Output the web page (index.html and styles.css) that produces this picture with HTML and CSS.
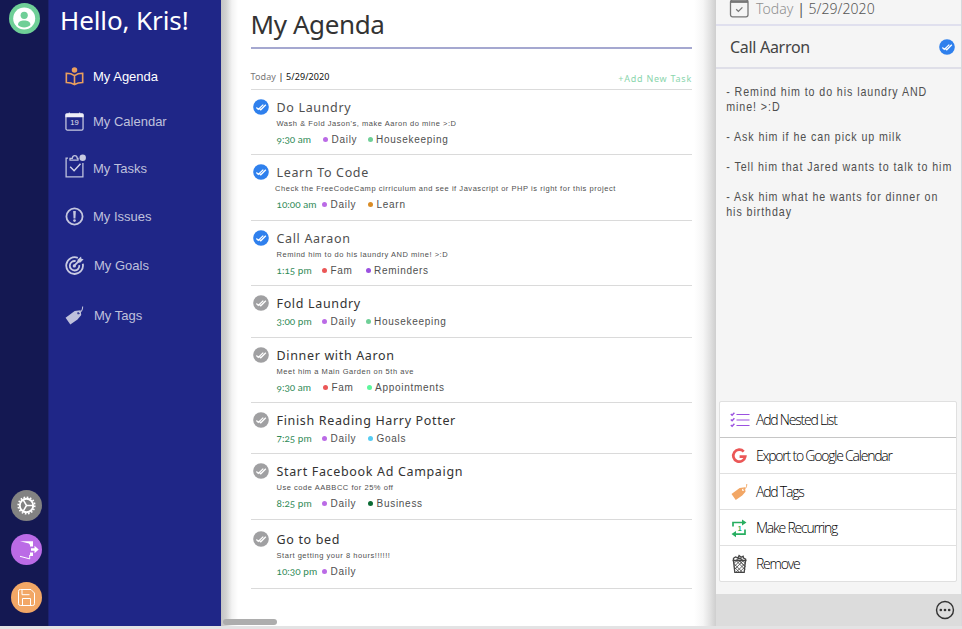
FILE: index.html
```html
<!DOCTYPE html>
<html lang="en">
<head>
<meta charset="utf-8">
<title>My Agenda</title>
<link rel="stylesheet" href="styles.css">
</head>
<body>
<svg class="defs" aria-hidden="true">
  <symbol id="check" viewBox="0 0 16 16">
    <circle cx="8" cy="8" r="7.800" fill="currentColor"/>
    <path d="M3.400 8.500l1.900 1.900 5-4.800M6.600 9.700l1.200 1.100 5-5" fill="none" stroke="#fff" stroke-width="1.300"/>
  </symbol>
  <symbol id="tag" viewBox="0 0 20 20">
    <path fill="currentColor" fill-rule="evenodd" d="M.6 12.300l9.600-7.100 6.200-.7.7 5.100-3.900 4.600-7.600 5.300zM14.200 6.200a1.300 1.300 0 1 0 .1 2.600 1.300 1.300 0 0 0-.1-2.600z"/>
    <path d="M14.300 7.400c2.600-.8 4.300-2.600 4.300-6.800" fill="none" stroke="currentColor" stroke-width="1.100"/>
  </symbol>
</svg>
<div class="app">
  <aside class="rail">
    <a class="avatar"><svg viewBox="0 0 31 31"><circle cx="15.500" cy="15.500" r="15.500" fill="#6fcf97"/><circle cx="15.200" cy="15.500" r="11" fill="#fff"/><circle cx="15.200" cy="12.300" r="3.600" fill="#6fcf97"/><path d="M9 22c0-3.600 2.800-4.500 6.200-4.500s6.200.9 6.200 4.500c-2.500 3.200-9.900 3.200-12.400 0z" fill="#6fcf97"/></svg></a>
    <div class="rail-actions">
      <a class="gear"><svg viewBox="0 0 31 31"><circle cx="15.500" cy="15.500" r="15.500" fill="#828282"/><g fill="none" stroke="#fff"><circle cx="15.500" cy="15.500" r="8.300" stroke-width="1.600" stroke-dasharray="1.630 1.630"/><circle cx="15.500" cy="15.500" r="6.700" stroke-width="1.900"/><path stroke-width="1.500" d="M15.500 15.500h6.500M15.500 15.500l-3.300-5.700M15.500 15.500l-3.300 5.700"/></g></svg></a>
      <a class="exit"><svg viewBox="0 0 31 31"><circle cx="15.500" cy="15.500" r="15.500" fill="#bb6be6"/><path d="M9 7.200h13v5.200h-3v-1.300l-1-1.700zM19 18.500h3v3.600h-3zM23.500 11.700l4.200 3.800-4.200 3.700v-2.500H20v-2.400h3.500z" fill="#fff"/><path d="M9 22.300l9.700 2.600v-4" fill="none" stroke="#fff" stroke-width="1"/></svg></a>
      <a class="save"><svg viewBox="0 0 31 31"><circle cx="15.500" cy="15.500" r="15.500" fill="#f2a766"/><g fill="none" stroke="#fff" stroke-width="1"><path d="M9.500 7.500h10.500l3.500 3.600v10.600a1.800 1.800 0 0 1-1.800 1.800H9.300a1.800 1.800 0 0 1-1.800-1.800V9.300a1.800 1.800 0 0 1 2-1.800z"/><path d="M11 7.500v5.200h7.500M11.500 23.500v-7h8v7"/></g></svg></a>
    </div>
  </aside>
  <nav class="sidebar">
    <h2>Hello, Kris!</h2>
    <a class="nav-item active"><svg viewBox="0 0 20 20"><circle cx="10" cy="3.200" r="2.900" fill="#eb9f5e"/><path d="M10 9C7.400 7.200 4.500 6.600 1.400 6.600v9.700c3.300 0 6 .5 8.600 2.200 2.600-1.700 5.300-2.200 8.600-2.200V6.600C15.500 6.600 12.600 7.200 10 9zM10 9v9" fill="none" stroke="#eb9f5e" stroke-width="1.700"/></svg>My Agenda</a>
    <a class="nav-item calendar"><svg viewBox="0 0 20 20"><rect x="1" y="2" width="18" height="17" rx="1.500" fill="none" stroke="#c9cbe2" stroke-width="1.300"/><path d="M.4 5.400V2.800q0-1.200 1.200-1.200H4V.4h1v1.200h10V.4h1v1.200h2.400q1.200 0 1.200 1.200v2.600z" fill="#eeeef7"/><text x="10" y="14" text-anchor="middle" class="cal-day">19</text></svg>My Calendar</a>
    <a class="nav-item tasks"><svg viewBox="0 0 21 24"><path d="M3 4.200H1.100v18.600h16.800V9M5 6.200V4.400h2.300q.3-2.700 2.500-2.700t2.500 2.700H13v1.800z" fill="none" stroke="#bfc2dd" stroke-width="1.300"/><path d="M5.200 12.800l3.900 4 6.400-7" fill="none" stroke="#d5d7e9" stroke-width="1.400"/><circle cx="17.700" cy="3.800" r="3.200" fill="#c9cbe2"/></svg>My Tasks</a>
    <a class="nav-item issues"><svg viewBox="0 0 20 20"><circle cx="10" cy="10" r="8.500" fill="none" stroke="#c5c7df" stroke-width="1.900"/><path d="M8.600 4.300h2.800L11 12H9z" fill="#c5c7df"/><circle cx="10" cy="14.300" r="1.400" fill="#c5c7df"/></svg>My Issues</a>
    <a class="nav-item goals"><svg viewBox="0 0 20 20"><g fill="none" stroke="#c9cbe2" stroke-width="1.900"><path d="M13.500 2A8.800 8.800 0 1 0 18.700 8.200"/><path d="M11.200 5.400A5 5 0 1 0 15 9.500"/><path d="M9.500 10.500l5-5"/></g><circle cx="9.800" cy="10.400" r="1.700" fill="#c9cbe2"/><path d="M13.200 3.900L16.900.6l.4 2.200 2.300.5-3.300 3.600-3 .2z" fill="#c9cbe2"/></svg>My Goals</a>
    <a class="nav-item tags"><svg viewBox="0 0 20 20"><use href="#tag"/></svg>My Tags</a>
  </nav>
  <main class="agenda">
    <h1>My Agenda</h1>
    <div class="day-head"><span class="day"><span class="muted">Today</span> | 5/29/2020</span><a class="add">+Add New Task</a></div>
    <ul class="tasks-list">
      <li class="task done"><svg><use href="#check"/></svg><div><h3>Do Laundry</h3><p>Wash &amp; Fold Jason's, make Aaron do mine &gt;:D</p><div class="meta wide"><time>9:30 am</time><span class="tag daily">Daily</span><span class="tag house">Housekeeping</span></div></div></li>
      <li class="task done tall"><svg><use href="#check"/></svg><div><h3>Learn To Code</h3><p class="outdent">Check the FreeCodeCamp cirriculum and see if Javascript or PHP is right for this project</p><div class="meta"><time>10:00 am</time><span class="tag daily">Daily</span><span class="tag learn">Learn</span></div></div></li>
      <li class="task done"><svg><use href="#check"/></svg><div><h3>Call Aaraon</h3><p>Remind him to do his laundry AND mine! &gt;:D</p><div class="meta close"><time>1:15 pm</time><span class="tag fam">Fam</span><span class="tag remind">Reminders</span></div></div></li>
      <li class="task short"><svg><use href="#check"/></svg><div><h3>Fold Laundry</h3><div class="meta close"><time>3:00 pm</time><span class="tag daily">Daily</span><span class="tag house">Housekeeping</span></div></div></li>
      <li class="task"><svg><use href="#check"/></svg><div><h3>Dinner with Aaron</h3><p>Meet him a Main Garden on 5th ave</p><div class="meta wide close"><time>9:30 am</time><span class="tag fam">Fam</span><span class="tag appt">Appointments</span></div></div></li>
      <li class="task shorter"><svg><use href="#check"/></svg><div><h3>Finish Reading Harry Potter</h3><div class="meta"><time>7:25 pm</time><span class="tag daily">Daily</span><span class="tag goal">Goals</span></div></div></li>
      <li class="task tall"><svg><use href="#check"/></svg><div><h3>Start Facebook Ad Campaign</h3><p>Use code AABBCC for 25% off</p><div class="meta"><time>8:25 pm</time><span class="tag daily">Daily</span><span class="tag business">Business</span></div></div></li>
      <li class="task last"><svg><use href="#check"/></svg><div><h3>Go to bed</h3><p>Start getting your 8 hours!!!!!!</p><div class="meta"><time>10:30 pm</time><span class="tag daily">Daily</span></div></div></li>
    </ul>
    <div class="scroll-thumb"></div>
  </main>
  <section class="detail">
    <header class="detail-date"><svg viewBox="0 0 20 20"><rect x="1" y="0" width="17.500" height="16.800" rx="2" fill="none" stroke="#777" stroke-width="1.300"/><path d="M1 1.800h17.500" stroke="#777" stroke-width="2.200"/><path d="M6.700 9.200l2.200 2.200 4-4" fill="none" stroke="#777" stroke-width="1.300"/></svg><span><span class="muted">Today</span> <b>|</b> 5/29/2020</span></header>
    <div class="detail-title"><span>Call Aarron</span><svg><use href="#check"/></svg></div>
    <div class="notes">
      <p>- Remind him to do his laundry AND<br>mine! &gt;:D</p>
      <p>- Ask him if he can pick up milk</p>
      <p>- Tell him that Jared wants to talk to him</p>
      <p>- Ask him what he wants for dinner on<br>his birthday</p>
    </div>
    <ul class="menu">
      <li><svg viewBox="0 0 20 20"><g fill="none" stroke="#9b51e0" stroke-width="1.200"><path d="M6.500 4.500h13M6.500 10h13M6.500 15.500h13"/><path d="M.8 4l1.300 1.200 2.300-2.500M.8 9.500l1.300 1.200 2.300-2.500M.8 15l1.300 1.200 2.300-2.500" stroke-width="1.400"/></g></svg>Add Nested List</li>
      <li><svg viewBox="0 0 20 20"><path d="M13.700 5.600A6 6 0 1 0 15.200 10.700H9.600" fill="none" stroke="#eb5757" stroke-width="2.700"/></svg>Export to Google Calendar</li>
      <li><svg viewBox="0 0 20 20" class="orange"><use href="#tag" x="1" y="1.500" width="17" height="17"/></svg>Add Tags</li>
      <li><svg viewBox="0 0 20 20"><g fill="none" stroke="#27ae60" stroke-width="1.700"><path d="M3 8.500V4.500h10M15 11.500v4.700H5"/></g><path d="M12 1.400l4.500 3.100-4.500 3.100zM6 13l-4.500 3.100L6 19.300z" fill="#27ae60"/><text x="9" y="12.700" text-anchor="middle" class="once">1</text></svg>Make Recurring</li>
      <li><svg viewBox="0 0 20 20"><g fill="none" stroke="#444" stroke-width="1.300" transform="translate(-.5 0)"><path d="M3 6.500h14M4 6.700L5.300 18.300h9.400L16 6.700"/><path d="M4 6V4.300L6 3l2.500.8L9.600 1.500l2 1.800 2-1 .5 1.800 2 1v1.400M7 5.500l3-1.200 3 1.400" stroke-width="1.300"/><path d="M4.300 9.500L7 7l8.500 8.500M4.700 12.500L10.200 7l5.500 5.500M5 15.500L13.300 7l2.500 2.600M15.600 9.500L6.500 18.200M15.300 13l-5.200 5.200M4.300 9.500l8.600 8.700M4.800 13l5 5.200M10 7l5.500 5.500" stroke-width=".8"/></g></svg>Remove</li>
    </ul>
    <footer class="detail-foot"><svg viewBox="0 0 20 20"><circle cx="10" cy="10" r="7.700" fill="none" stroke="#333" stroke-width="1.300"/><g fill="#333"><circle cx="6.200" cy="10" r="1.200"/><circle cx="10" cy="10" r="1.200"/><circle cx="13.800" cy="10" r="1.200"/></g></svg></footer>
  </section>
</div>
</body>
</html>
```
FILE: styles.css
```css
* { box-sizing: border-box; }
body { margin: 0; height: 629px; overflow: hidden; background: #e3e3e4; font-family: "Liberation Sans", Arial, sans-serif; }
h1, h2, h3, p, ul { margin: 0; padding: 0; font-weight: 400; list-style: none; }
svg { display: block; flex: none; }
.defs { position: absolute; width: 0; height: 0; }

.app { display: flex; height: 626px; }

.rail { width: 48px; background: #141852; display: flex; flex-direction: column; justify-content: space-between; padding: 3px 0 13px; }
.rail svg { width: 31px; height: 31px; }
.avatar { margin-left: 9px; }
.rail-actions { margin-left: 11px; }
.exit svg { margin-top: 13px; }
.save svg { margin-top: 17px; }

.sidebar { width: 173px; background: #1f2687; border-left: 1px solid #1c2170; color: #bfc1dc; }
.sidebar h2 { margin: 0 0 26px 11px; height: 40px; font: 26px/40px "Noto Sans", sans-serif; letter-spacing: -.1px; color: #fff; white-space: nowrap; }
.nav-item { display: flex; align-items: center; gap: 9px; height: 20px; padding-left: 16px; font-size: 13px; }
.nav-item svg { width: 19px; height: 19px; }
.nav-item.active { color: #fff; }
.calendar { margin-top: 25px; }
.cal-day { font: 8px "Liberation Sans", sans-serif; fill: #e3e4f0; }
.tasks { margin-top: 27px; }
.nav-item.tasks svg { width: 21px; height: 24px; margin: -4px -2px 0 0; }
.issues { margin-top: 28px; }
.goals { margin-top: 29px; }
.tags { margin-top: 30px; }
.goals, .tags { gap: 10px; }

.agenda { width: 495px; padding: 0 24px 0 29.500px; display: flex; flex-direction: column; color: #333;
  background: linear-gradient(to right, #c3c3c3, #d2d2d2 5px, #f3f3f3 11px, transparent 17px) left / 20px 100% no-repeat,
    linear-gradient(to left, #cecece, #e2e2e2 6px, #f6f6f6 13px, transparent 22px) right / 22px 100% no-repeat, #fff; }
.agenda h1 { height: 49px; border-bottom: 2px solid #a5a8d0; font: 26px/49px "Noto Sans", sans-serif; letter-spacing: -.4px; }
.day-head { height: 41px; border-bottom: 1px solid #dbdbdb; display: flex; justify-content: space-between; font: 9px/12px "Noto Sans", sans-serif; padding-top: 22px; color: #111; }
.day { letter-spacing: .1px; }
.muted { color: #777; }
.add { color: #8ad5ac; letter-spacing: .75px; padding-top: 2px; }

.task { display: flex; height: 65px; padding: 8px 0 0 2.500px; border-bottom: 1px solid #dadada; color: #a0a0a2; }
.task > svg, .detail-title svg { width: 16px; height: 16px; }
.task > svg { margin: 1px 7.500px 0 0; }
.task.done { color: #2f80ed; }
.task.done h3 { color: #4f4f4f; }
.task.tall { height: 66px; }
.task.short { height: 52px; }
.task.shorter { height: 51px; }
.task.last { height: 69px; padding-top: 10px; }
.task h3 { height: 18px; font: 12.500px/20px "Noto Sans", sans-serif; letter-spacing: .66px; color: #333; }
.task p { height: 14px; font-size: 7.500px; line-height: 15px; letter-spacing: .54px; color: #4f4f4f; font-variant-numeric: oldstyle-nums; }
.task p.outdent { margin-left: -1.500px; }
.meta { display: grid; grid-template-columns: 45.500px 46px auto; height: 18px; font-size: 10px; line-height: 19px; color: #4f4f4f; }
.meta.close { grid-template-columns: 45.500px 43.500px auto; }
.meta.wide { grid-template-columns: 46.500px 44.500px auto; }
.meta.wide.close { grid-template-columns: 46.500px 43.500px auto; }
.meta time { font: 10px/18px Lato, sans-serif; font-variant-numeric: oldstyle-nums; letter-spacing: .02px; color: #2f8a57; white-space: nowrap; }
.tag { display: flex; align-items: center; gap: 3.500px; letter-spacing: .72px; }
.tag::before { content: ""; width: 5px; height: 5px; border-radius: 50%; background: var(--dot); }
.daily { --dot: #bb6be6; }
.house { --dot: #6fcf97; }
.learn { --dot: #d98c26; }
.fam { --dot: #eb5757; }
.remind { --dot: #9b51e0; }
.appt { --dot: #5cf79c; }
.goal { --dot: #56ccf2; }
.business { --dot: #0b6b34; }
.scroll-thumb { width: 54px; height: 6px; border-radius: 3px; background: #adadad; margin: auto 0 1px -27.500px; }

.detail { width: 246px; background: #f5f5f5; border-right: 1px solid #d8d8dc; display: flex; flex-direction: column; }
.detail-date { height: 26px; border-bottom: 2px solid #e0e0ee; display: flex; gap: 6px; padding-left: 13px; font: 300 14px/18px "Noto Sans", sans-serif; color: #555; }
.detail-date svg { width: 21px; height: 20px; }
.detail-date .muted { color: #909090; }
.detail-date b { font-weight: 400; }
.detail-date > span { letter-spacing: .05px; }
.detail-title { height: 43px; border-bottom: 2px solid #dfdfe8; display: flex; align-items: center; justify-content: space-between; padding: 0 6px 0 14px; font: 16px "Noto Sans", sans-serif; letter-spacing: -.3px; color: #444; }
.detail-title span { padding-top: 1px; }
.detail-title svg { color: #2f80ed; }
.notes { width: 120%; padding: 15px 0 0 12.500px; font-size: 13px; line-height: 15px; letter-spacing: 1.130px; color: #4f4f4f; white-space: nowrap; transform: scaleX(.82); transform-origin: left; }
.notes p { margin-bottom: 15px; }
.menu { margin: auto 4px 12px 3px; border: 1px solid #e0e0e0; border-radius: 2px; background: #fff; }
.menu li { display: flex; align-items: center; gap: 6px; height: 36px; padding-left: 10px; border-bottom: 1px solid #e0e0e0; font: 300 14px "Open Sans", sans-serif; letter-spacing: -1.220px; color: #000; }
.menu li:first-child { border-color: #c6c6c6; }
.menu li:last-child { border: 0; height: 35px; }
.menu svg { width: 20px; height: 20px; }
.orange { color: #f2a766; }
.once { font: bold 7px "Liberation Sans", sans-serif; fill: #27ae60; }
.detail-foot { height: 32px; background: #dcdcdc; display: flex; align-items: center; justify-content: flex-end; padding-right: 5px; }
.detail-foot svg { width: 22px; height: 22px; }
```
